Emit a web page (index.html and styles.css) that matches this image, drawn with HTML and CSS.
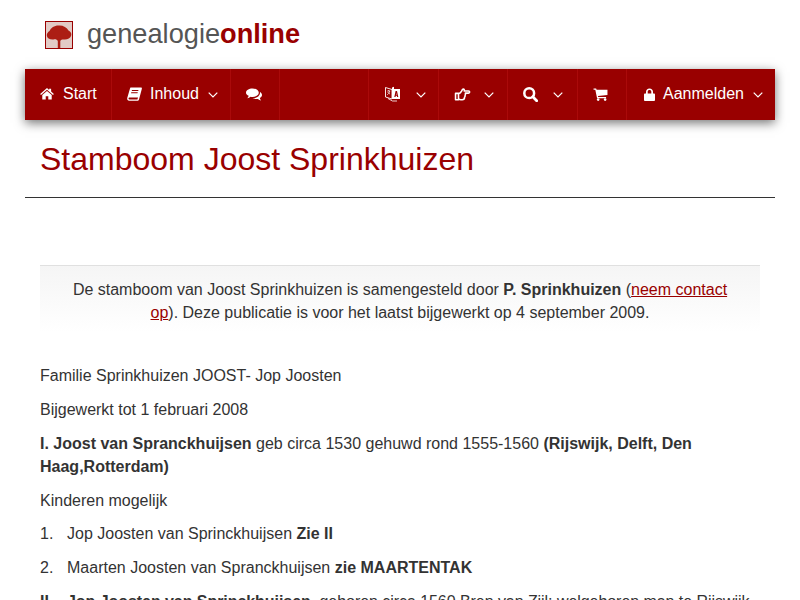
FILE: index.html
```html
<!DOCTYPE html>
<html lang="nl">
<head>
  <meta charset="UTF-8">
  <title>Stamboom Joost Sprinkhuizen</title>
  <link rel="stylesheet" href="styles.css">
</head>
<body>
  <header class="brand">
    <svg class="brand-logo" viewBox="0 0 28 28">
      <rect x="0.500" y="0.500" width="27" height="27" fill="#e2cbc6" stroke="#990000"/>
      <path d="M12.800 27V20C12 18.500 10.500 18 8.500 18.500C5 18.800 2 17.500 1.800 14.500C1.700 12.500 3 11 4.500 10C6 6.500 10 4 14.500 4.500C18.500 4.500 22 6.500 23.500 9.500C25.800 10.500 26.800 12.500 26.200 14.500C25.500 17.500 22 18.800 19 18.500C17.500 18.300 16 18.700 15.300 20V27Z" fill="#ac1e14"/>
    </svg>
    <span class="brand-name">genealogie<b>online</b></span>
  </header>

  <nav class="mainnav">
    <a class="item item-start" href="#">
      <svg class="ico" width="14" height="12" viewBox="0 0 16 14"><path d="M8 0L10.500 2.200V1H12.800V4.200L16 7L15 8.100L8 2L1 8.100L0 7ZM8 3.400L13.500 8.100V13.500H9.500V9.500H6.500V13.500H2.500V8.100Z"/></svg>
      <span>Start</span>
    </a>
    <a class="item item-inhoud" href="#">
      <svg class="ico" width="15" height="14" viewBox="0 0 15 14"><path d="M3.500 0.500H14.500C15 1 15 1.500 14.800 2L12 12.500C11.800 13.300 11.200 13.800 10.300 13.800H2.200C0.800 13.800 0 12.800 0.200 11.300C0.300 10.800 0.400 10.300 0.600 9.800L3 1.500C3.100 1 3.300 0.700 3.500 0.500ZM5 3L4.700 4H11.200L11.500 3ZM4.300 5.200L4 6.200H10.500L10.800 5.200ZM2.400 10.600C1.800 10.600 1.500 11 1.500 11.500C1.500 12.100 1.900 12.400 2.500 12.400H10.400L11 10.600Z" fill-rule="evenodd"/></svg>
      <span>Inhoud</span>
      <svg class="chev" width="10" height="6" viewBox="0 0 10 6"><path d="M0.700 0.700L5 5L9.300 0.700"/></svg>
    </a>
    <a class="item item-plain" href="#">
      <svg class="ico" width="16" height="13" viewBox="0 0 16 13"><path d="M6.500 0.500C10 0.500 12.800 2.300 12.800 4.700C12.800 7 10 8.900 6.500 8.900C5.800 8.900 5.200 8.800 4.600 8.700C3.600 9.500 2.500 10 1.300 10.200C2 9.400 2.500 8.600 2.700 7.800C1.100 7 0 5.900 0 4.700C0 2.300 2.900 0.500 6.500 0.500Z"/><path d="M13.800 3.800C15.100 4.600 16 5.700 16 7C16 8.200 15 9.300 13.800 10C14 10.800 14.400 11.600 15.100 12.400C13.900 12.200 12.800 11.700 11.900 10.900C11.300 11 10.700 11.100 10 11.100C8.700 11.100 7.500 10.800 6.500 10.300C10.500 10.300 14 8 14 4.700C14 4.400 13.900 4.100 13.800 3.800Z"/></svg>
    </a>
    <div class="nav-spacer"></div>
    <a class="item item-lang" href="#">
      <svg class="ico" width="15" height="16" viewBox="0 0 15 16"><path d="M0.500 1.500L7 3.500V13L0.500 11Z" fill="none" stroke="#fff" stroke-width="0.900"/><path d="M7 1.500L9 0.800V3H15V13H7Z"/><path d="M2.200 5H5.200M3.700 4V5M4.700 5C4.400 7 3.400 8 2.200 8.800M2.700 6C3.200 7 4 7.700 5 8" fill="none" stroke="#fff" stroke-width="0.700"/><path d="M9.300 11L10.600 5H12L13.300 11H12.100L11.800 9.700H10.800L10.500 11ZM11 8.700H11.600L11.300 7Z" fill="#990000"/><path d="M3 12.500L7.500 15H12" fill="none" stroke="#fff" stroke-width="0.800"/></svg>
      <svg class="chev" width="10" height="6" viewBox="0 0 10 6"><path d="M0.700 0.700L5 5L9.300 0.700"/></svg>
    </a>
    <a class="item item-hand" href="#">
      <svg class="ico" width="17" height="13" viewBox="0 0 17 14"><path d="M4.200 5.800H1V12.700H4.200ZM4.200 6.300C5.500 5.800 6.800 4.600 7.500 3.300C8 2.300 8.300 1.200 9.300 1.200C10.500 1.200 10.700 2.300 10.300 3.300H15C15.700 3.300 16.200 3.800 16.200 4.400C16.200 5 15.700 5.500 15 5.500H11.600C11.800 6.400 11.700 7.300 11.300 8C11.400 8.800 11.200 9.500 10.700 10C10.700 11.500 9.800 12.700 8.200 12.700H6.600C5.800 12.700 5 12.300 4.200 11.900" fill="none" stroke="#fff" stroke-width="1.700" stroke-linejoin="round"/></svg>
      <svg class="chev" width="10" height="6" viewBox="0 0 10 6"><path d="M0.700 0.700L5 5L9.300 0.700"/></svg>
    </a>
    <a class="item item-search" href="#">
      <svg class="ico" width="15" height="15" viewBox="0 0 15 15"><circle cx="6.200" cy="6.200" r="4.900" fill="none" stroke="#fff" stroke-width="2.500"/><path d="M9.800 9.800L13.700 13.700" fill="none" stroke="#fff" stroke-width="2.800" stroke-linecap="round"/></svg>
      <svg class="chev" width="10" height="6" viewBox="0 0 10 6"><path d="M0.700 0.700L5 5L9.300 0.700"/></svg>
    </a>
    <a class="item item-plain item-cart" href="#">
      <svg class="ico" width="15" height="13" viewBox="0 0 15 14"><path d="M0 0.500H2.800L3.300 2H15V7.500L4.800 8.700L5 9.700H13.500V11H3.800L1.900 1.800H0Z"/><circle cx="5" cy="12.500" r="1.400"/><circle cx="12.500" cy="12.500" r="1.400"/></svg>
    </a>
    <a class="item item-login" href="#">
      <svg class="ico" width="11" height="13" viewBox="0 0 11 13"><path d="M2 5.500V3.800C2 1.800 3.500 0.500 5.500 0.500C7.500 0.500 9 1.800 9 3.800V5.500H10C10.500 5.500 11 6 11 6.500V12C11 12.500 10.500 13 10 13H1C0.500 13 0 12.500 0 12V6.500C0 6 0.500 5.500 1 5.500ZM3.700 5.500H7.300V3.800C7.300 2.800 6.500 2.100 5.500 2.100C4.500 2.100 3.700 2.800 3.700 3.800Z" fill-rule="evenodd"/></svg>
      <span>Aanmelden</span>
      <svg class="chev" width="10" height="6" viewBox="0 0 10 6"><path d="M0.700 0.700L5 5L9.300 0.700"/></svg>
    </a>
  </nav>

  <main class="content">
    <h1 class="page-title">Stamboom Joost Sprinkhuizen</h1>

    <div class="intro">
      De stamboom van Joost Sprinkhuizen is samengesteld door <b>P. Sprinkhuizen</b> (<a href="#">neem contact op</a>). Deze publicatie is voor het laatst bijgewerkt op 4 september 2009.
    </div>

    <div class="article">
      <p>Familie Sprinkhuizen JOOST- Jop Joosten</p>
      <p>Bijgewerkt tot 1 februari 2008</p>
      <p><b>I. Joost van Spranckhuijsen</b> geb circa 1530 gehuwd rond 1555-1560 <b>(Rijswijk, Delft, Den Haag,Rotterdam)</b></p>
      <p>Kinderen mogelijk</p>
      <p class="numbered"><span>1.</span><span>Jop Joosten van Sprinckhuijsen <b>Zie II</b></span></p>
      <p class="numbered"><span>2.</span><span>Maarten Joosten van Spranckhuijsen <b>zie MAARTENTAK</b></span></p>
      <p class="numbered tight"><b>II.</b><span><b>Jop Joosten van Sprinckhuijsen</b>, geboren circa 1560 Bren van Zijl; welgeboren man te Rijswijk</span></p>
    </div>
  </main>
</body>
</html>
```

FILE: styles.css
```css
html, body {
  height: 100vh;
  overflow: hidden;
}
body {
  margin: 0;
  background: #fff;
  color: #333;
  font-family: "Liberation Sans", Arial, sans-serif;
  font-size: 16px;
  line-height: 1.45;
}
.brand {
  display: flex;
  align-items: center;
  height: 69px;
  padding-left: 45px;
  box-sizing: border-box;
}
.brand-logo {
  width: 28px;
  height: 28px;
  margin-right: 14px;
}
.brand-name {
  font-size: 27.2px;
  color: #555;
  margin-bottom: 2px;
}
.brand-name b {
  color: #990000;
}
.mainnav {
  display: flex;
  height: 51px;
  margin: 0 25px;
  background: #990000;
  box-shadow: 0 3px 10px rgba(0,0,0,0.55);
}
.item {
  display: flex;
  align-items: center;
  box-sizing: border-box;
  padding-left: 15px;
  border-right: 1px solid #aa0a0a;
  color: #fff;
  text-decoration: none;
}
.item span {
  margin-bottom: 2px;
}
.ico {
  fill: #fff;
  flex: none;
  margin-bottom: 1px;
}
.chev {
  flex: none;
  fill: none;
  stroke: #fff;
  stroke-width: 1.2;
  margin-top: 1px;
}
.item-start { width: 87px; }
.item-start .ico { margin-right: 9px; }
.item-inhoud { width: 119px; }
.item-inhoud .ico { margin-right: 8px; }
.item-inhoud .chev { margin-left: 9px; }
.item-plain { width: 49px; }
.nav-spacer {
  flex: 1;
  border-right: 1px solid #aa0a0a;
}
.item-lang { width: 70px; padding-left: 16px; }
.item-lang .chev { margin-left: 16px; }
.item-hand { width: 69px; padding-left: 15px; }
.item-hand .chev { margin-left: 13px; }
.item-search { width: 70px; }
.item-search .chev { margin-left: 15px; }
.item-login { flex: none; width: 148px; padding-left: 17px; border-right: 0; }
.item-login .ico { margin-right: 8px; }
.item-login .chev { margin-left: 9px; }
.content {
  margin: 0 25px;
}
.page-title {
  margin: 0;
  padding: 16px 15px 15px;
  border-bottom: 1px solid #333;
  font-size: 32px;
  font-weight: normal;
  line-height: 46px;
  color: #990000;
}
.intro {
  margin: 67px 15px 0;
  padding: 12px 30px 0;
  height: 54px;
  border-top: 1px solid #e0e0e0;
  background: linear-gradient(#f5f5f5, #fff);
  text-align: center;
}
.intro a {
  color: #990000;
}
.article {
  margin: 32px 15px 0;
}
.article p {
  margin: 0 0 10.6px;
}
.numbered {
  display: flex;
}
.numbered > :first-child {
  flex: none;
  width: 27px;
}
.tight {
  letter-spacing: -0.055px;
}
```
